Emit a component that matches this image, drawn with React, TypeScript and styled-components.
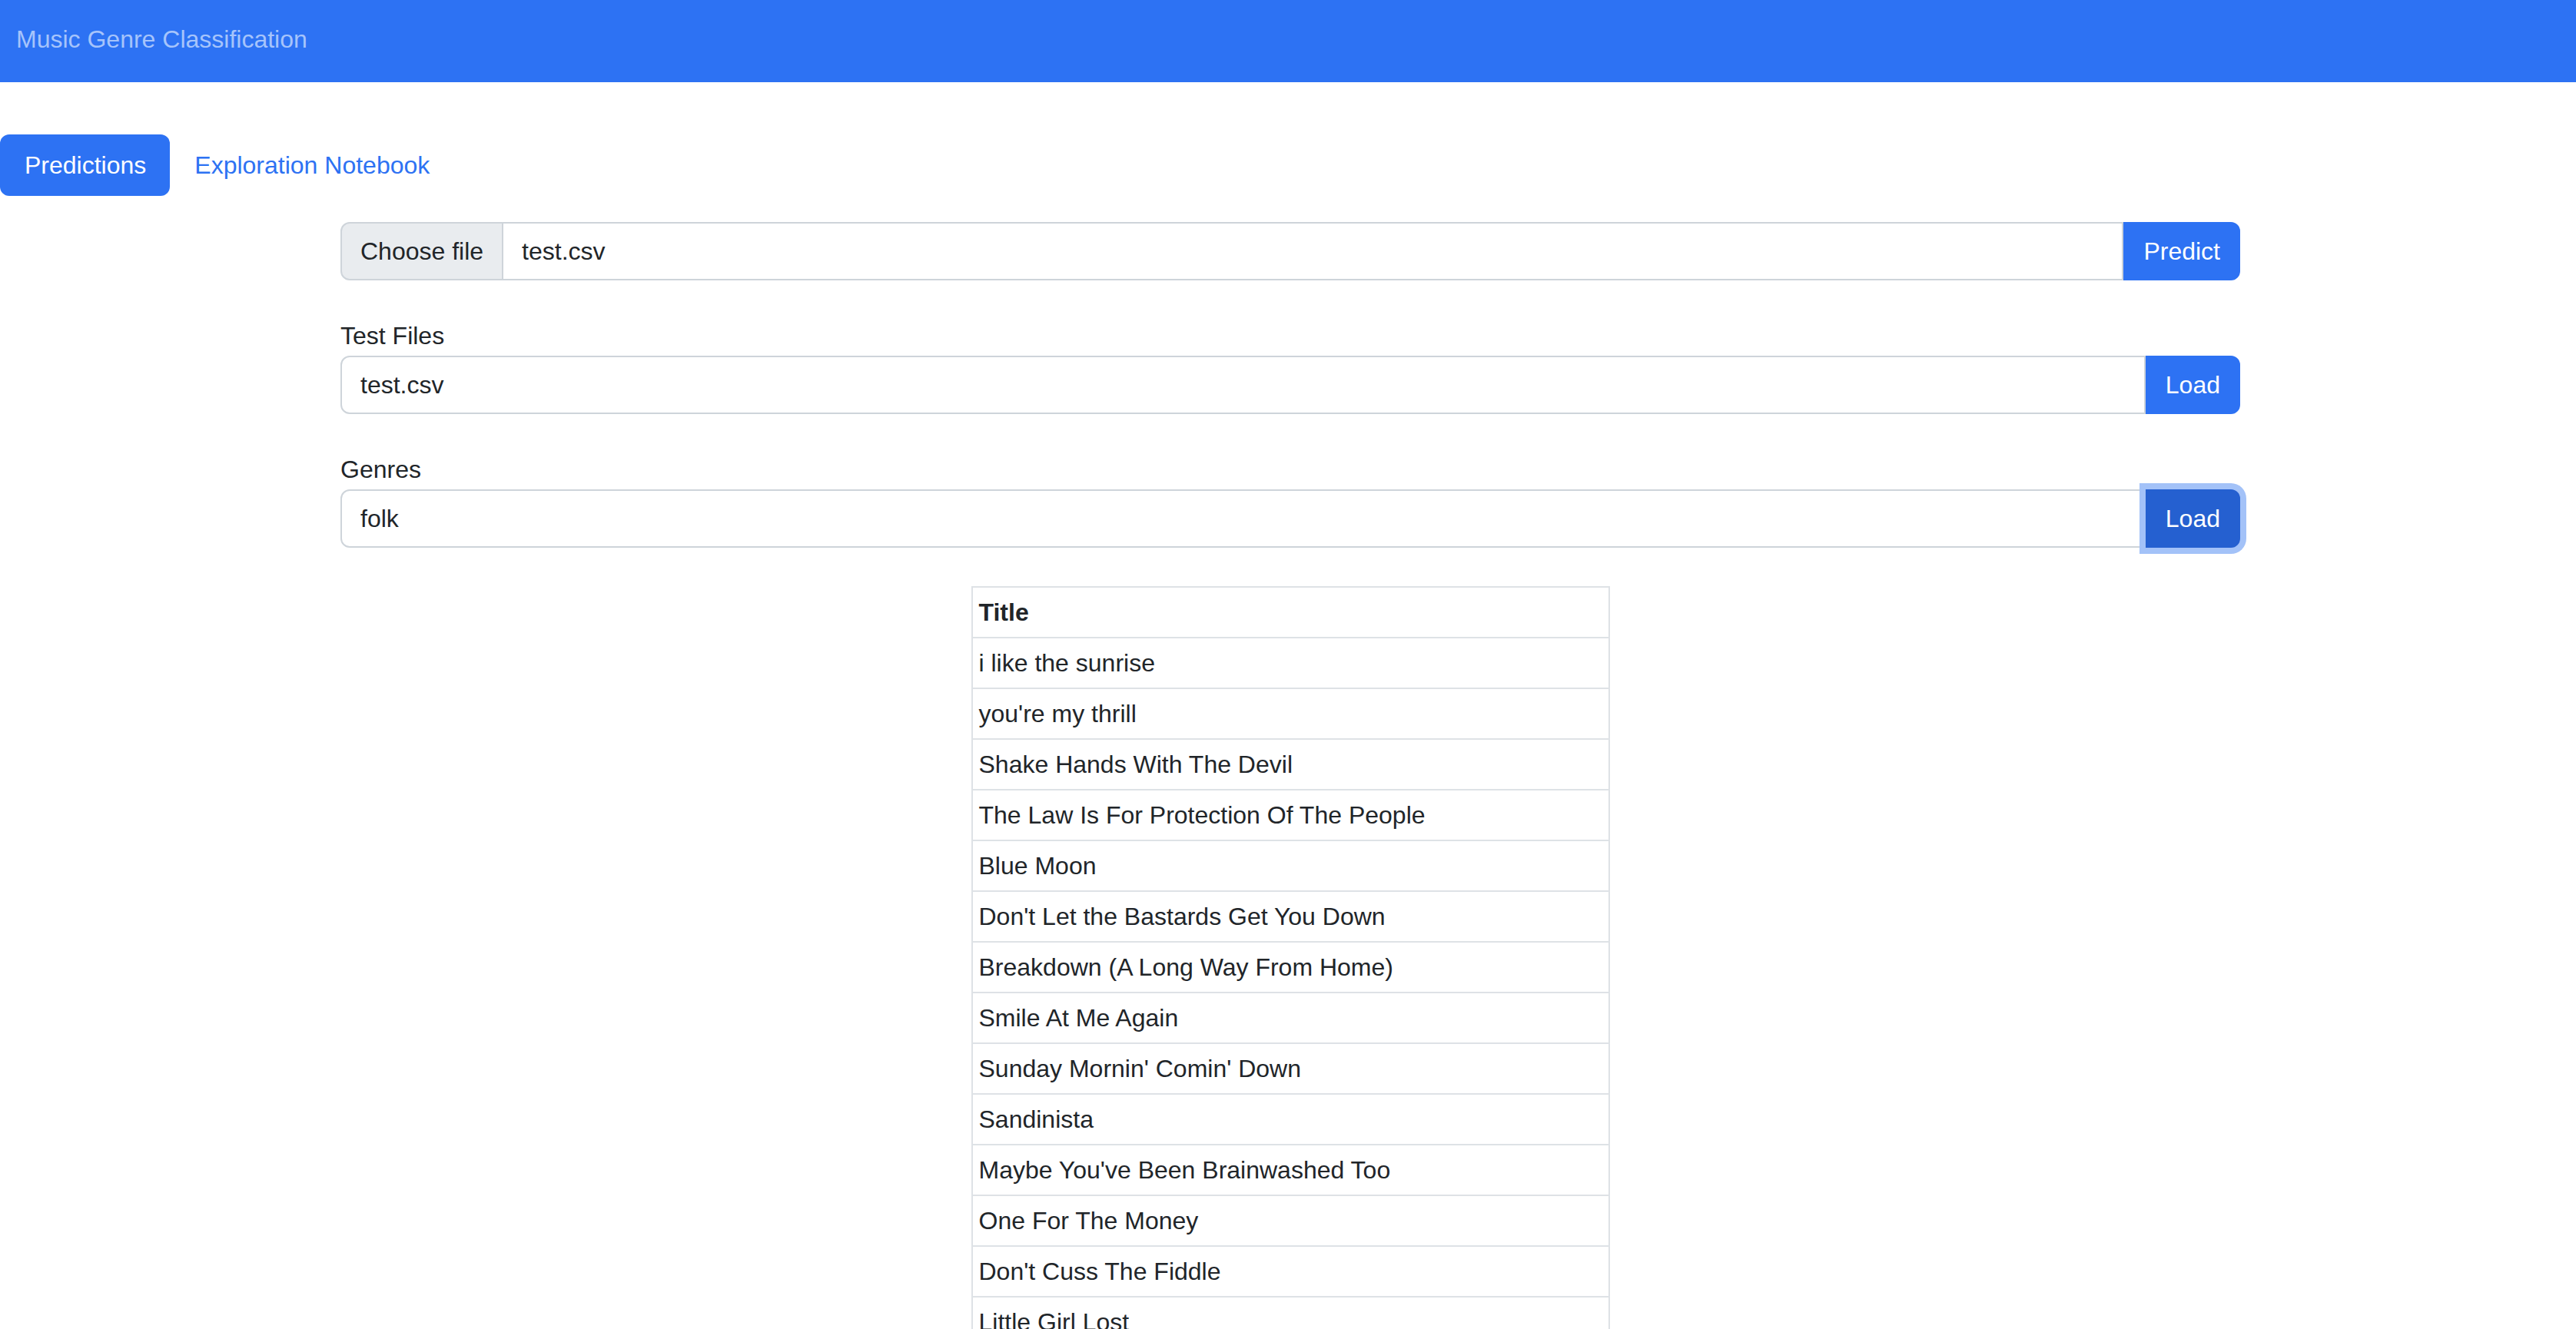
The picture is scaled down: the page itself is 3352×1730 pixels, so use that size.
import React from "react";
import styled, { createGlobalStyle } from "styled-components";

const GlobalStyle = createGlobalStyle`
  html, body {
    margin: 0;
    padding: 0;
    background: #ffffff;
  }
  body {
    font-family: "Liberation Sans", Arial, Helvetica, sans-serif;
    font-size: 32px;
    line-height: 1.5;
    color: #212529;
  }
  * { box-sizing: border-box; }
`;

const Navbar = styled.header`
  height: 107px;
  background: #2d72f3;
  display: flex;
  align-items: center;
  padding: 0 0 6px 21px;
`;

const Brand = styled.span`
  font-size: 32px;
  line-height: 48px;
  color: #a6c4fb;
`;

const Tabs = styled.nav`
  display: flex;
  margin-top: 68px;
`;

const Tab = styled.a<{ $active?: boolean }>`
  display: block;
  padding: 16px 31px 16px 32px;
  font-size: 32px;
  line-height: 48px;
  border-radius: 12px;
  text-decoration: none;
  cursor: pointer;
  background: ${(p) => (p.$active ? "#2d72f3" : "transparent")};
  color: ${(p) => (p.$active ? "#ffffff" : "#2d72f3")};
`;

const Container = styled.main`
  width: 2472px;
  margin: 34px 0 0 443px;
  display: flex;
  flex-direction: column;
`;

const Group = styled.div<{ $spaced?: boolean }>`
  display: flex;
  flex-direction: column;
  margin-top: ${(p) => (p.$spaced ? "48px" : "0")};
`;

const Label = styled.label`
  display: block;
  font-size: 32px;
  line-height: 48px;
  margin-bottom: 2px;
  color: #212529;
`;

const InputRow = styled.div`
  display: flex;
  align-items: stretch;
  height: 76px;
`;

const FilePick = styled.span`
  display: flex;
  align-items: center;
  padding: 0 24px;
  background: #e9ecef;
  border: 2px solid #ced4da;
  border-radius: 12px 0 0 12px;
  color: #212529;
  white-space: nowrap;
`;

const FileName = styled.span`
  flex: 1;
  display: flex;
  align-items: center;
  padding: 0 24px;
  border: 2px solid #ced4da;
  border-left: none;
  color: #212529;
`;

const TextField = styled.div`
  flex: 1;
  display: flex;
  align-items: center;
  padding: 0 24px;
  border: 2px solid #ced4da;
  border-radius: 12px 0 0 12px;
  color: #212529;
`;

const Button = styled.button<{ $focused?: boolean }>`
  font-family: inherit;
  font-size: 32px;
  line-height: 48px;
  padding: 12px 24px;
  border: 2px solid ${(p) => (p.$focused ? "#2560d0" : "#2d72f3")};
  background: ${(p) => (p.$focused ? "#2560d0" : "#2d72f3")};
  color: #ffffff;
  border-radius: 0 12px 12px 0;
  cursor: pointer;
  position: relative;
  z-index: ${(p) => (p.$focused ? 2 : 1)};
  box-shadow: ${(p) => (p.$focused ? "0 0 0 8px #a3c2f8" : "none")};
`;

const Table = styled.table`
  width: 831px;
  margin: 50px auto 0;
  border-collapse: collapse;
  border: 2px solid #dee2e6;
`;

const Th = styled.th`
  text-align: left;
  font-weight: 700;
  padding: 8px;
  line-height: 48px;
  border: 2px solid #dee2e6;
`;

const Td = styled.td`
  padding: 8px;
  line-height: 48px;
  border: 2px solid #dee2e6;
`;

const titles = [
  "i like the sunrise",
  "you're my thrill",
  "Shake Hands With The Devil",
  "The Law Is For Protection Of The People",
  "Blue Moon",
  "Don't Let the Bastards Get You Down",
  "Breakdown (A Long Way From Home)",
  "Smile At Me Again",
  "Sunday Mornin' Comin' Down",
  "Sandinista",
  "Maybe You've Been Brainwashed Too",
  "One For The Money",
  "Don't Cuss The Fiddle",
  "Little Girl Lost",
  "Early Morning Rain",
  "Goodnight Irene",
];

export default function App() {
  return (
    <>
      <GlobalStyle />
      <Navbar>
        <Brand>Music Genre Classification</Brand>
      </Navbar>
      <Tabs>
        <Tab $active>Predictions</Tab>
        <Tab>Exploration Notebook</Tab>
      </Tabs>
      <Container>
        <InputRow>
          <FilePick>Choose file</FilePick>
          <FileName>test.csv</FileName>
          <Button>Predict</Button>
        </InputRow>
        <Group $spaced>
          <Label>Test Files</Label>
          <InputRow>
            <TextField>test.csv</TextField>
            <Button>Load</Button>
          </InputRow>
        </Group>
        <Group $spaced>
          <Label>Genres</Label>
          <InputRow>
            <TextField>folk</TextField>
            <Button $focused>Load</Button>
          </InputRow>
        </Group>
        <Table>
          <thead>
            <tr>
              <Th>Title</Th>
            </tr>
          </thead>
          <tbody>
            {titles.map((t) => (
              <tr key={t}>
                <Td>{t}</Td>
              </tr>
            ))}
          </tbody>
        </Table>
      </Container>
    </>
  );
}
